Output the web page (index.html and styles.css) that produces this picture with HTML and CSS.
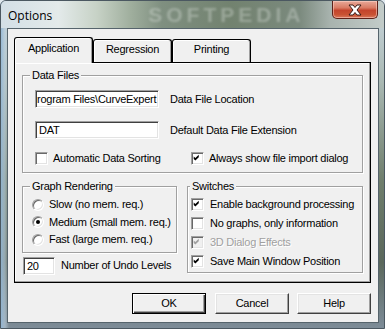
FILE: index.html
```html
<!DOCTYPE html>
<html>
<head>
<meta charset="utf-8">
<title>Options</title>
<link rel="stylesheet" href="styles.css">
</head>
<body>
<div class="window">
  <div class="titlebar">
    <span class="title">Options</span>
    <span class="watermark">SOFTPEDIA</span>
    <span class="close"><svg width="18" height="12" viewBox="0 0 18 12"><path d="M3 1h4l2 2.5 2-2.5h4l-4 5 4 5h-4l-2-2.5-2 2.5h-4l4-5z" fill="#fff" stroke="#3a1a14" stroke-width="1" stroke-linejoin="round"/></svg></span>
  </div>
  <div class="client">
    <div class="tabs">
      <div class="tab active">Application</div>
      <div class="tab">Regression</div>
      <div class="tab">Printing</div>
    </div>
    <div class="panel">
      <fieldset class="group data">
        <legend>Data Files</legend>
        <div class="group-body data-body">
          <div class="row">
            <div class="edit path">rogram Files\CurveExpert</div>
            <span class="lbl">Data File Location</span>
          </div>
          <div class="row">
            <div class="edit">DAT</div>
            <span class="lbl">Default Data File Extension</span>
          </div>
          <div class="row checks">
            <div class="check first"><span class="cb"></span><span>Automatic Data Sorting</span></div>
            <div class="check"><span class="cb"><svg viewBox="0 0 13 13" width="11" height="11"><polygon points="2,4 4,6 8,2 8,5 4,9 2,7" fill="#000"/></svg></span><span>Always show file import dialog</span></div>
          </div>
        </div>
      </fieldset>
      <div class="lower">
        <div class="leftcol">
          <fieldset class="group graph">
            <legend>Graph Rendering</legend>
            <div class="group-body graph-body">
              <div class="radio"><span class="rb"></span><span>Slow (no mem. req.)</span></div>
              <div class="radio"><span class="rb on"></span><span>Medium (small mem. req.)</span></div>
              <div class="radio"><span class="rb"></span><span>Fast (large mem. req.)</span></div>
            </div>
          </fieldset>
          <div class="undo">
            <div class="edit small">20</div>
            <span class="lbl">Number of Undo Levels</span>
          </div>
        </div>
        <fieldset class="group switches">
          <legend>Switches</legend>
          <div class="group-body switch-body">
            <div class="check sw"><span class="cb"><svg viewBox="0 0 13 13" width="11" height="11"><polygon points="2,4 4,6 8,2 8,5 4,9 2,7" fill="#000"/></svg></span><span>Enable background processing</span></div>
            <div class="check sw"><span class="cb"></span><span>No graphs, only information</span></div>
            <div class="check sw disabled"><span class="cb"><svg viewBox="0 0 13 13" width="11" height="11"><polygon points="2,4 4,6 8,2 8,5 4,9 2,7" fill="#a0a0a0"/></svg></span><span>3D Dialog Effects</span></div>
            <div class="check sw"><span class="cb"><svg viewBox="0 0 13 13" width="11" height="11"><polygon points="2,4 4,6 8,2 8,5 4,9 2,7" fill="#000"/></svg></span><span>Save Main Window Position</span></div>
          </div>
        </fieldset>
      </div>
    </div>
    <div class="buttons">
      <div class="btn default">OK</div>
      <div class="btn">Cancel</div>
      <div class="btn">Help</div>
    </div>
  </div>
</div>
</body>
</html>
```

FILE: styles.css
```css
html, body {
  margin: 0;
  padding: 0;
}
body {
  width: 385px;
  height: 329px;
  overflow: hidden;
  background: #dfe8ee;
  font-family: "Liberation Sans", Arial, sans-serif;
  font-size: 11px;
  line-height: 13px;
  letter-spacing: -0.25px;
  color: #000;
}
.window {
  width: 385px;
  height: 329px;
  box-sizing: border-box;
  border: 1px solid #4b5861;
  border-radius: 6px 6px 0 0;
  display: flex;
  flex-direction: column;
  background:
    linear-gradient(90deg, rgba(150,185,215,0.9) 0, rgba(190,210,225,0.6) 4px, rgba(0,0,0,0) 8px),
    linear-gradient(180deg, #c9d6de 0, #a9b8b2 25%, #6f7e6c 55%, #5b685c 80%, #7d8c98 100%);
}
.titlebar {
  height: 27px;
  flex: none;
  display: flex;
  align-items: flex-start;
  border-radius: 5px 5px 0 0;
  background: linear-gradient(90deg, #d3dfe6 0, #e3eaea 15%, #c7d2c6 25%, #9fae9d 34%, #7f8f80 42%, #72826f 60%, #7b8a7e 78%, #a8b3ae 86%, #c3ccc9 100%);
  overflow: hidden;
}
.title {
  margin: 7px 0 0 7px;
  font-family: "Open Sans", "Noto Sans", sans-serif;
  font-size: 12px;
  line-height: 15px;
  letter-spacing: 0;
  color: #000;
}
.watermark {
  margin: 3px 0 0 96px;
  font-family: "Liberation Sans", Arial, sans-serif;
  font-weight: bold;
  font-size: 21px;
  line-height: 22px;
  letter-spacing: 4px;
  color: rgba(225, 232, 225, 0.35);
  filter: blur(1.1px);
}
.close {
  margin-left: auto;
  margin-right: 6px;
  width: 46px;
  height: 18px;
  box-sizing: border-box;
  border: 1px solid #5e2119;
  border-top: none;
  border-radius: 0 0 5px 5px;
  background: linear-gradient(180deg, #e9a999 0, #d97b64 40%, #c4442c 55%, #c95233 80%, #d9775c 100%);
  box-shadow: inset 0 0 0 1px rgba(255, 220, 210, 0.5);
  display: flex;
  align-items: center;
  justify-content: center;
}
.close svg {
  display: block;
}
.client {
  flex: none;
  height: 295px;
  margin: 0 5px 0 6px;
  box-sizing: border-box;
  border: 1px solid #56646c;
  background: #f0f0f0;
  padding: 8px 7px 0 6px;
  display: flex;
  flex-direction: column;
}
.tabs {
  display: flex;
  align-items: flex-end;
  height: 25px;
  position: relative;
  z-index: 1;
}
.tab {
  width: 79px;
  height: 23px;
  box-sizing: border-box;
  border: 1px solid #000;
  border-bottom: none;
  border-radius: 3px 3px 0 0;
  box-shadow: inset -1px 0 0 #a0a0a0, inset 1px 1px 0 #fff;
  background: #f0f0f0;
  text-align: center;
  padding-top: 3px;
}
.tab.active {
  height: 26px;
  margin-bottom: -1px;
  padding-top: 4px;
}
.panel {
  width: 357px;
  height: 221px;
  box-sizing: border-box;
  border: 1px solid #000;
  box-shadow: inset -1px -1px 0 #a0a0a0, inset 1px 1px 0 #fff;
  padding: 6px 7px 0 7px;
  display: flex;
  flex-direction: column;
}
.group {
  margin: 0;
  padding: 0;
  min-width: 0;
  border: 1px solid #a0a0a0;
  box-shadow: inset 1px 1px 0 #fff, 1px 1px 0 #fff;
}
.group legend {
  padding: 0 2px;
  margin-left: 7px;
  background: #f0f0f0;
  line-height: 13px;
}
.switches legend {
  margin-left: 2px;
}
.data-body {
  padding: 8px 0 7px 12px;
  display: flex;
  flex-direction: column;
  gap: 13px;
}
.row {
  display: flex;
  align-items: center;
}
.edit {
  width: 124px;
  height: 18px;
  box-sizing: border-box;
  border: 1px solid;
  border-color: #a0a0a0 #fff #fff #a0a0a0;
  box-shadow: inset 1px 1px 0 #404040, inset -1px -1px 0 #e3e3e3;
  background: #fff;
  padding: 2px 0 0 3px;
  white-space: nowrap;
  overflow: hidden;
  flex: none;
}
.edit.path {
  padding-left: 1px;
}
.lbl {
  margin-left: 11px;
  white-space: nowrap;
}
.checks {
  height: 13px;
}
.check {
  display: flex;
  align-items: center;
  gap: 5px;
  white-space: nowrap;
}
.check.first {
  width: 156px;
  flex: none;
}
.cb {
  width: 13px;
  height: 13px;
  box-sizing: border-box;
  border: 1px solid;
  border-color: #a0a0a0 #fff #fff #a0a0a0;
  box-shadow: inset 1px 1px 0 #696969, inset -1px -1px 0 #e3e3e3;
  background: #fff;
  flex: none;
  display: flex;
  align-items: center;
  justify-content: center;
}
.cb svg {
  display: block;
}
.check.disabled {
  color: #a0a0a0;
  text-shadow: 1px 1px 0 #fff;
}
.check.disabled .cb {
  background: #f0f0f0;
}
.lower {
  margin-top: 7px;
  display: flex;
  gap: 10px;
  align-items: flex-start;
}
.leftcol {
  width: 155px;
  flex: none;
  display: flex;
  flex-direction: column;
}
.graph {
  width: 155px;
  box-sizing: border-box;
}
.graph-body {
  padding: 3px 0 3px 9px;
}
.radio {
  height: 17.5px;
  display: flex;
  align-items: center;
  gap: 5px;
  white-space: nowrap;
}
.rb {
  width: 12px;
  height: 12px;
  box-sizing: border-box;
  border-radius: 50%;
  border: 1px solid;
  border-color: #a0a0a0 #fff #fff #a0a0a0;
  box-shadow: inset 1px 1px 0 #696969, inset -1px -1px 0 #e3e3e3;
  background: #fff;
  flex: none;
  display: flex;
  align-items: center;
  justify-content: center;
}
.rb.on::after {
  content: "";
  width: 4px;
  height: 4px;
  border-radius: 50%;
  background: #000;
}
.undo {
  margin: 4px 0 0 1px;
  display: flex;
  align-items: center;
}
.edit.small {
  width: 32px;
  padding-left: 3px;
}
.undo .lbl {
  margin-left: 6px;
}
.switches {
  width: 176px;
  box-sizing: border-box;
}
.switch-body {
  padding: 2px 0 1px 3px;
}
.check.sw {
  height: 19px;
  gap: 6px;
}
.buttons {
  margin-top: 10px;
  display: flex;
  justify-content: flex-end;
  gap: 8px;
}
.btn {
  width: 74px;
  height: 21px;
  box-sizing: border-box;
  border: 1px solid;
  border-color: #fff #404040 #404040 #fff;
  box-shadow: inset -1px -1px 0 #a0a0a0, inset 1px 1px 0 #e3e3e3;
  background: #f0f0f0;
  display: flex;
  align-items: center;
  justify-content: center;
}
.btn.default {
  border-color: #000;
  box-shadow: inset 1px 1px 0 #fff, inset -1px -1px 0 #404040, inset -2px -2px 0 #a0a0a0;
  margin-right: 1px;
}
```
